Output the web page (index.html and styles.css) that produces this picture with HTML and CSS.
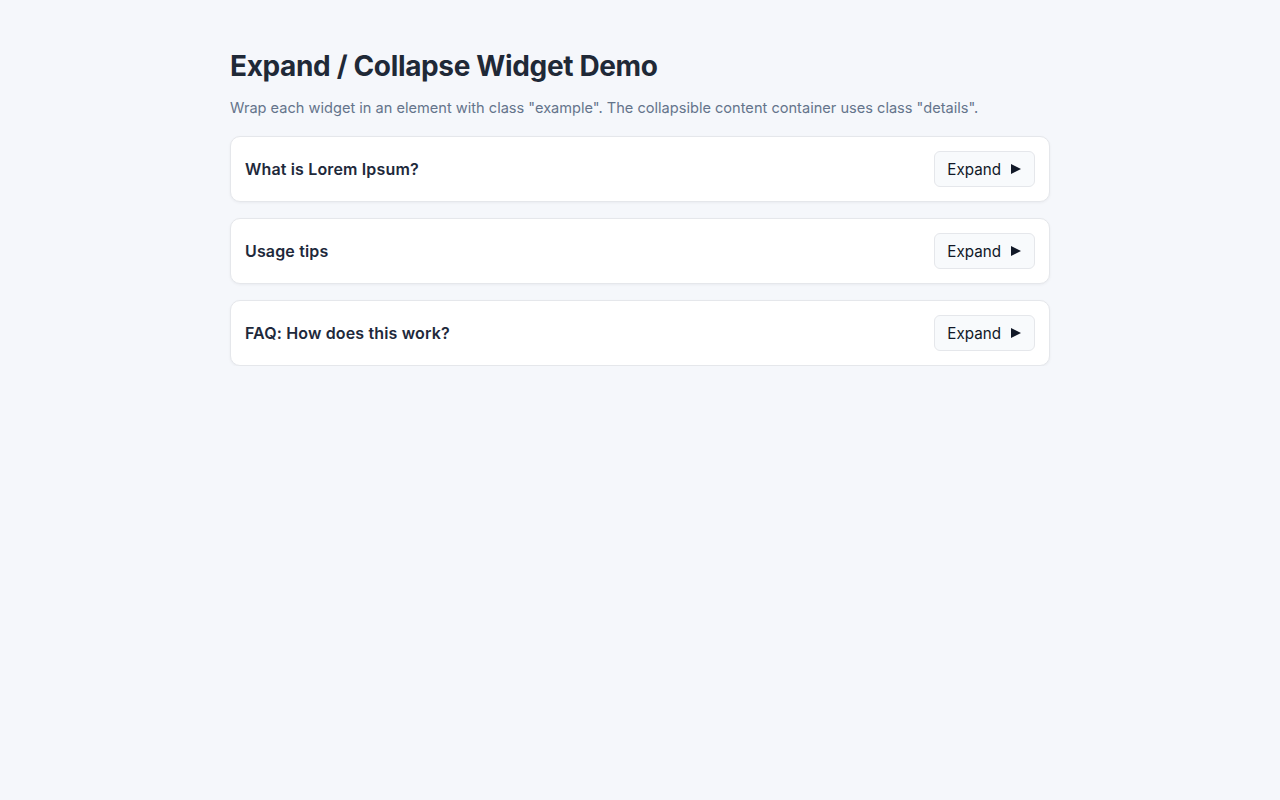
FILE: index.html
```html
<!DOCTYPE html>
<html lang="en">
<head>
<meta charset="utf-8">
<title>Expand / Collapse Widget Demo</title>
<link rel="stylesheet" href="styles.css">
</head>
<body>
<main class="page">
  <h1 class="title">Expand / Collapse Widget Demo</h1>
  <p class="lead">Wrap each widget in an element with class "example". The collapsible content container uses class "details".</p>
  <div class="list">
    <section class="example">
      <div class="row">
        <h2 class="q">What is Lorem Ipsum?</h2>
        <button class="toggle" type="button">Expand <span class="tri"></span></button>
      </div>
    </section>
    <section class="example">
      <div class="row">
        <h2 class="q">Usage tips</h2>
        <button class="toggle" type="button">Expand <span class="tri"></span></button>
      </div>
    </section>
    <section class="example">
      <div class="row">
        <h2 class="q">FAQ: How does this work?</h2>
        <button class="toggle" type="button">Expand <span class="tri"></span></button>
      </div>
    </section>
  </div>
</main>
</body>
</html>
```
FILE: styles.css
```css
* { box-sizing: border-box; }
html, body { margin: 0; padding: 0; }
body {
  background: #f5f7fb;
  font-family: Inter, "Noto Sans", "Liberation Sans", sans-serif;
  color: #1f2937;
}
.page {
  width: 820px;
  margin: 0 auto;
  padding-top: 49px;
}
.title {
  margin: 0;
  font-size: 28px;
  line-height: 34px;
  font-weight: 700;
  color: #1f2937;
  letter-spacing: -0.35px;
}
.lead {
  margin: 14px 0 17px;
  font-size: 14.6px;
  line-height: 22px;
  color: #64748b;
}
.list {
  display: flex;
  flex-direction: column;
  gap: 16px;
}
.example {
  background: #fff;
  border: 1px solid #e5e7eb;
  border-radius: 10px;
  box-shadow: 0 1px 3px rgba(15, 23, 42, 0.05);
}
.row {
  display: flex;
  align-items: center;
  justify-content: space-between;
  padding: 14px;
}
.q {
  margin: 0;
  font-size: 16px;
  line-height: 22px;
  font-weight: 600;
  color: #1e293b;
  letter-spacing: 0.15px;
}
.toggle {
  display: flex;
  align-items: center;
  gap: 10px;
  height: 36px;
  padding: 0 13px 0 12px;
  font-family: inherit;
  font-size: 15.2px;
  color: #111827;
  background: #f8fafc;
  border: 1px solid #e5e7eb;
  border-radius: 6px;
}
.tri {
  width: 0;
  height: 0;
  border-top: 5.5px solid transparent;
  border-bottom: 5.5px solid transparent;
  border-left: 10px solid #111827;
}
```
